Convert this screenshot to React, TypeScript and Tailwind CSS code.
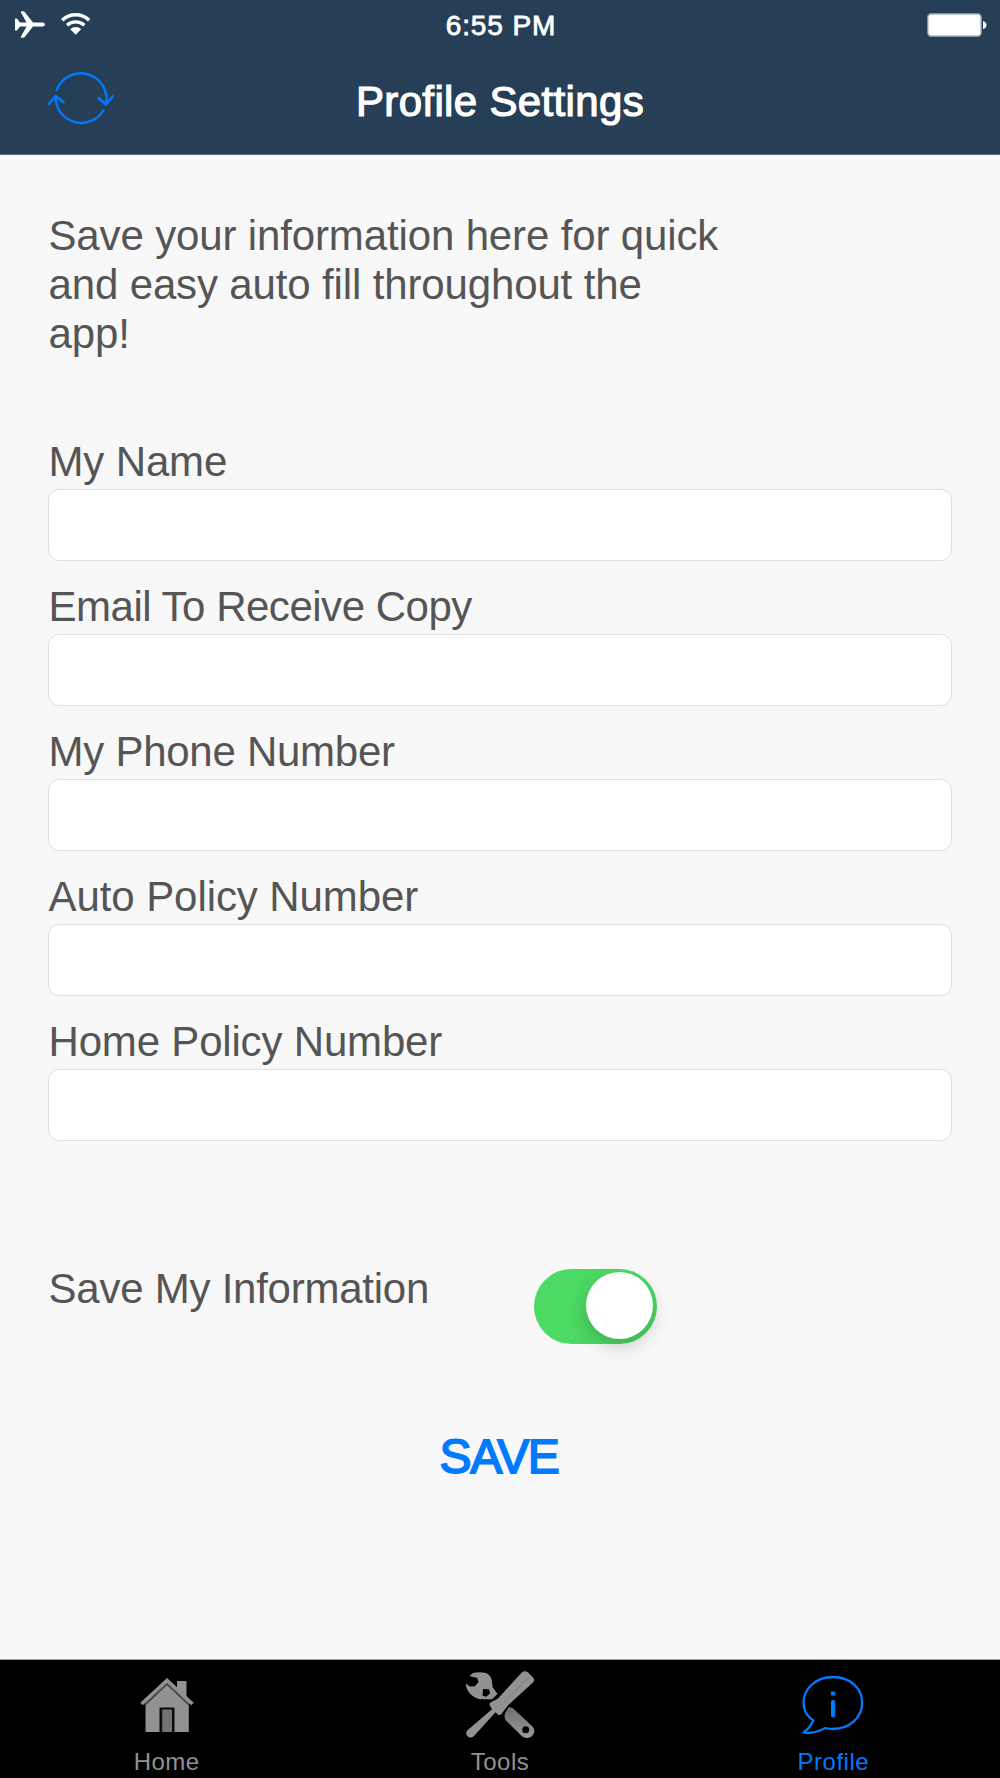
// App.tsx
import { useState } from "react";

const fields = [
  { label: "My Name", tracking: "tracking-[-0.15px]" },
  { label: "Email To Receive Copy", tracking: "tracking-[-0.48px]" },
  { label: "My Phone Number", tracking: "tracking-[-0.26px]" },
  { label: "Auto Policy Number", tracking: "tracking-[-0.08px]" },
  { label: "Home Policy Number", tracking: "tracking-[-0.18px]" },
];

const PlaneIcon = () => (
  <svg className="w-[30px] h-[27px]" viewBox="0 0 30 27" fill="#fff">
    <path d="M0 7.500H2L5 11.500h6.500L6 1.400Q5.600.2 6.600.2h1.800q.8 0 1.300.8L18 11.500H28q2 .3 2 2T28 15.500H18L9.700 26q-.5.8-1.300.8H6.600Q5.600 26.800 6 25.600L11.500 15.500H5L2 19.500H0Z" />
  </svg>
);

const WifiIcon = () => (
  <svg className="w-[30px] h-[22px]" viewBox="0 0 30 22" fill="none" stroke="#fff">
    <path d="M1.200 7.200Q7 1.800 14.700 1.800T28.200 7.200" strokeWidth="3.400" />
    <path d="M6 12.200Q9.700 8.900 14.700 8.900T23.400 12.200" strokeWidth="3.400" />
    <path d="M9.200 16.200Q11.500 14 14.700 14T20.200 16.200L14.700 21.800Z" fill="#fff" stroke="none" />
  </svg>
);

const BatteryIcon = () => (
  <svg className="w-[60px] h-[24px]" viewBox="0 0 60 24">
    <rect x="0.700" y="0.700" width="53.500" height="22.500" rx="3.500" fill="#fff" stroke="#8494a1" strokeWidth="1.400" />
    <path d="M56 8q3.500 1 3.500 4T56 16Z" fill="#fff" />
  </svg>
);

const RefreshIcon = () => (
  <svg
    className="w-[66px] h-[54px]"
    viewBox="0 0 66 54"
    fill="none"
    stroke="#007aff"
    strokeWidth="2.400"
    strokeLinecap="round"
    strokeLinejoin="round"
  >
    <path d="M8.800 18.800A25.700 25.700 0 0 1 58 33" />
    <path d="M50.300 27 58 33.500 65 25" />
    <path d="M55.300 39.500A25.700 25.700 0 0 1 7.600 25.300" />
    <path d="M1 33 7.600 25 15.500 31.200" />
  </svg>
);

const HomeIcon = () => (
  <svg className="w-[54px] h-[54px]" viewBox="0 0 54 54">
    <path d="M5.500 25 27 5 48.800 25V54H5.500Z" fill="#929292" />
    <path d="M37 3H46.500V22L37 13Z" fill="#929292" />
    <path d="M1.500 26 27 2.500 52.500 26" fill="none" stroke="#929292" strokeWidth="3.600" />
    <path d="M4.500 27.500 27 6.300 49.500 27.500" fill="none" stroke="#3d3d3d" strokeWidth="1.300" />
    <rect x="19.500" y="29.500" width="15" height="24.500" fill="#0b0b0b" />
    <rect x="22.200" y="31.500" width="9.800" height="22.500" fill="#737373" />
  </svg>
);

const ToolsIcon = () => (
  <svg className="w-[70px] h-[68px]" viewBox="0 0 70 68">
    <defs>
      <linearGradient id="handle" x1="0" y1="0" x2="0" y2="1">
        <stop offset="0" stopColor="#6f6f6f" />
        <stop offset="1" stopColor="#999" />
      </linearGradient>
    </defs>
    <path
      fillRule="evenodd"
      fill="#929292"
      d="M4.500 5 8 2Q15 .2 21.700 2.300 26 5 26.700 9L27.700 16.500 32.500 23 27 28.300H15Q8 26.500 4.500 22 .5 17 1 12.500L5 15.500 10 15.200 13.500 11 12.300 7ZM18 18 17.500 24.500 21 25.700 25 22.500 24 18.300Z"
    />
    <path
      fillRule="evenodd"
      fill="url(#handle)"
      d="M40 42.500 43.300 36.500Q45.500 35.500 48 37.300L67.700 55.700Q70 58.500 69 61.700 67.500 66 63.300 66.700 59.500 67.500 56.700 65L40.500 49Q39 46 40 42.500ZM60.700 55.200A3.500 3.500 0 1 0 60.700 62.200 3.500 3.500 0 1 0 60.700 55.200Z"
    />
    <path
      fill="#929292"
      d="M57 1.200Q60-.7 63 1.200L68 6.500Q70 8.500 68.500 11L43.300 34 36 43.500 33.500 44 30.500 41.200 9 65Q6.500 67.500 3.500 66 .7 64 1.200 61.500 2 59 4.500 57.500L27 38.300 24.300 33.500 25.500 31.500 33 27.500Z"
    />
    <path d="M64 6 39 31" stroke="#858585" strokeWidth="1.200" />
  </svg>
);

const InfoIcon = () => (
  <svg className="w-[62px] h-[60px]" viewBox="0 0 62 60" fill="none" stroke="#007aff" strokeWidth="2.300">
    <path
      strokeLinejoin="round"
      d="M11.300 45.500C5 41.300 1.500 35 1.500 28 1.500 13.300 14 2 31 2S60.200 13 60.200 27.800 47.500 54 31 54C28 54 25.500 53.700 23.300 53 16.500 56.500 9 59.200 1.500 57.500 6 54.500 9 50.500 11.300 45.500Z"
    />
    <rect x="29.500" y="25.500" width="3.300" height="16.500" rx="1" fill="#007aff" strokeWidth="1" />
    <rect x="29.500" y="17" width="3.300" height="3" fill="#007aff" strokeWidth="1" />
  </svg>
);

const App = () => {
  const [saveInfo, setSaveInfo] = useState(true);

  return (
    <div className="w-[1000px] h-[1778px] flex flex-col bg-[#f8f8f8] text-[#555] font-['Liberation_Sans',sans-serif]">
      <header className="h-[155px] shrink-0 bg-[#263f56] border-b border-[#5d6f80] text-white">
        <div className="h-[50px] grid grid-cols-3 items-center pl-[15px] pr-[13px]">
          <div className="flex items-center gap-4 pb-[3px]">
            <PlaneIcon />
            <WifiIcon />
          </div>
          <div className="text-center text-[28px] leading-[50px] pt-px tracking-[0.9px] [-webkit-text-stroke:0.8px_#fff]">6:55 PM</div>
          <div className="flex justify-end pb-px">
            <BatteryIcon />
          </div>
        </div>
        <div className="h-[104px] grid grid-cols-3 items-center px-12">
          <button className="w-[66px] pb-2">
            <RefreshIcon />
          </button>
          <h1 className="flex justify-center text-[42px] tracking-[0.35px] whitespace-nowrap leading-[104px] [-webkit-text-stroke:1.2px_#fff]">Profile Settings</h1>
        </div>
      </header>

      <main className="grow px-12 pt-[56px]">
        <p className="w-[680px] h-[147px] pl-[0.5px] text-[42px] leading-[49px] tracking-[-0.14px]">
          Save your information here for quick and easy auto fill throughout the app!
        </p>

        <div className="pt-[72px]">
          {fields.map(({ label, tracking }) => (
            <label key={label} className="block h-[145px]">
              <span className={`block h-[59px] pt-[7px] pl-[0.5px] text-[42px] leading-[49px] ${tracking}`}>{label}</span>
              <input className="block w-full h-[72px] px-4 rounded-[11px] border border-[#e0e0e0] bg-white text-[36px] outline-none" />
            </label>
          ))}
        </div>

        <div className="mt-[114px] flex">
          <span className="w-[486px] -mt-[5px] pl-[0.5px] text-[42px] leading-[49px] tracking-[-0.24px]">Save My Information</span>
          <button
            role="switch"
            aria-checked={saveInfo}
            onClick={() => setSaveInfo(!saveInfo)}
            className={`flex w-[123px] h-[75px] rounded-full px-1 pt-[3px] ${saveInfo ? "justify-end bg-[#4cd964]" : "justify-start bg-gray-300"}`}
          >
            <span className="block size-[67px] rounded-full bg-white shadow-[0_7px_18px_rgba(0,0,0,0.2)]" />
          </button>
        </div>

        <button className="block mx-auto mt-[83px] pr-[2px] text-[48px] leading-[60px] tracking-[-1.4px] text-[#007aff] [-webkit-text-stroke:1.800px_#007aff]">
          SAVE
        </button>
      </main>

      <nav className="h-[119px] shrink-0 grid grid-cols-3 bg-black border-t border-[#9a9a9a] text-[24px] leading-[28px] text-[#929292]">
        <a className="flex flex-col items-center">
          <div className="h-[88px] pt-[18px]">
            <HomeIcon />
          </div>
          <span className="tracking-[0.5px]">Home</span>
        </a>
        <a className="flex flex-col items-center">
          <div className="h-[88px] pt-[11px]">
            <ToolsIcon />
          </div>
          <span className="tracking-[0.5px]">Tools</span>
        </a>
        <a className="flex flex-col items-center text-[#007aff]">
          <div className="h-[88px] pt-[15px]">
            <InfoIcon />
          </div>
          <span className="tracking-[0.5px]">Profile</span>
        </a>
      </nav>
    </div>
  );
};

export default App;
